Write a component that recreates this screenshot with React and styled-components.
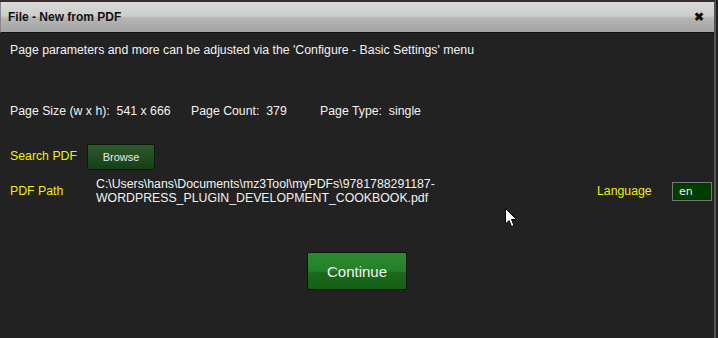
import styled, { createGlobalStyle } from "styled-components";

const Global = createGlobalStyle`
  html, body { margin: 0; padding: 0; background: #222; }
  body { font-family: "Liberation Sans", Arial, sans-serif; font-size: 12.3px; }
`;

const Window = styled.div`
  position: relative;
  width: 716px;
  height: 338px;
  background: #222222;
  border-top: 2px solid #3a2c2c;
  border-right: 2px solid #555;
  box-sizing: border-box;
  color: #f2f2f2;
`;

const TitleBar = styled.div`
  height: 30px;
  display: flex;
  align-items: center;
  justify-content: space-between;
  padding: 0 10px 0 7px;
  background: linear-gradient(#dadada 0%, #cdcdcd 45%, #b5b5b5 55%, #a4a4a4 100%);
  border-bottom: 1px solid #111;
  border-left: 1px solid #888;
  color: #111;
  font-weight: bold;
  font-size: 12px;
`;

const Close = styled.span`
  font-size: 12px;
  font-weight: bold;
  color: #111;
`;

const Body = styled.div`
  padding: 10px 0 0 10px;
  display: flex;
  flex-direction: column;
`;

const Line = styled.div`
  line-height: 14px;
  margin-top: ${({ $top }) => $top || 0}px;
  display: flex;
  align-items: center;
`;

const Info = styled.span`
  width: ${({ $w }) => $w}px;
  white-space: pre;
`;

const Label = styled.span`
  color: #f0f000;
  width: ${({ $w }) => $w || 77}px;
  flex-shrink: 0;
`;

const Row = styled.div`
  display: flex;
  align-items: center;
  margin-top: ${({ $top }) => $top || 0}px;
  height: ${({ $h }) => $h}px;
`;

const Browse = styled.button`
  width: 68px;
  height: 26px;
  border: 1px solid #0c1a0c;
  border-radius: 2px;
  background: linear-gradient(#2c5a2c, #173f17);
  color: #eaeaea;
  font-family: inherit;
  font-size: 11px;
  padding: 0;
  margin-top: 2px;
`;

const Path = styled.div`
  width: 501px;
  line-height: 14px;
  margin-left: 9px;
  white-space: pre;
`;

const LangBox = styled.div`
  width: 32px;
  height: 17px;
  margin-left: 21px;
  border: 1px solid #777;
  background: #003e00;
  color: #eee;
  padding-left: 6px;
  line-height: 17px;
  font-family: "DejaVu Sans", sans-serif;
  font-size: 11px;
`;

const Actions = styled.div`
  display: flex;
  justify-content: center;
  margin-top: 46px;
  padding-right: 10px;
`;

const Continue = styled.button`
  width: 100px;
  height: 38px;
  border: 1px solid #0b150b;
  border-radius: 2px;
  background: linear-gradient(#2e8a2e 0%, #23802a 50%, #1a6a1a 55%, #156015 100%);
  color: #f4f4f4;
  font-family: inherit;
  font-size: 15px;
  padding: 0;
`;

const Cursor = styled.svg`
  position: absolute;
  left: 505px;
  top: 206px;
`;

export default function App() {
  return (
    <>
      <Global />
      <Window>
        <TitleBar>
          <span>File - New from PDF</span>
          <Close>✖</Close>
        </TitleBar>
        <Body>
          <Line>Page parameters and more can be adjusted via the 'Configure - Basic Settings' menu</Line>
          <Line $top={47}>
            <Info $w={181}>Page Size (w x h):  541 x 666</Info>
            <Info $w={129}>Page Count:  379</Info>
            <Info>Page Type:  single</Info>
          </Line>
          <Row $top={24} $h={28}>
            <Label>Search PDF</Label>
            <Browse>Browse</Browse>
          </Row>
          <Row $top={6} $h={30}>
            <Label $w={77}>PDF Path</Label>
            <Path>{"C:\\Users\\hans\\Documents\\mz3Tool\\myPDFs\\9781788291187-\nWORDPRESS_PLUGIN_DEVELOPMENT_COOKBOOK.pdf"}</Path>
            <Label $w={54}>Language</Label>
            <LangBox>en</LangBox>
          </Row>
          <Actions>
            <Continue>Continue</Continue>
          </Actions>
        </Body>
        <Cursor width="13" height="20" viewBox="0 0 13 20">
          <path d="M0.5 0.5 L0.5 16 L4 12.5 L6.5 18.5 L9 17.5 L6.5 11.5 L11.5 11.5 Z" fill="#fff" stroke="#000" strokeWidth="1" />
        </Cursor>
      </Window>
    </>
  );
}
